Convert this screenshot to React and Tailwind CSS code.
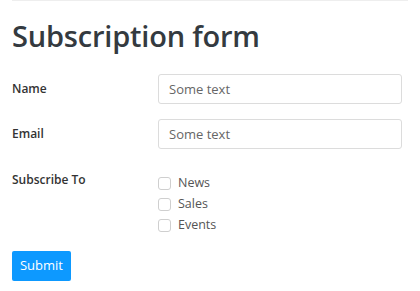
export default function App() {
  return (
    <div className="min-h-[291px] bg-white px-3 text-[#333]" style={{ fontFamily: '"Open Sans", "Noto Sans", sans-serif' }}>
      <div className="border-t border-[#eeeeee] pt-[15px]">
        <h1 className="text-[29px] font-semibold leading-[40px] text-[#343a40] tracking-[-0.2px]">Subscription form</h1>
        <form className="mt-[18px]" onSubmit={(e) => e.preventDefault()}>
          <div className="flex items-center">
            <label className="w-[146px] text-[12px] font-semibold">Name</label>
            <input
              type="text"
              placeholder="Some text"
              className="h-[30px] w-[244px] rounded-[3px] border border-[#dcdcdc] px-[10px] text-[13px] placeholder:text-[#666] outline-none"
            />
          </div>
          <div className="mt-[15px] flex items-center">
            <label className="w-[146px] text-[12px] font-semibold">Email</label>
            <input
              type="text"
              placeholder="Some text"
              className="h-[30px] w-[244px] rounded-[3px] border border-[#dcdcdc] px-[10px] text-[13px] placeholder:text-[#666] outline-none"
            />
          </div>
          <div className="mt-[22px] flex">
            <label className="w-[146px] text-[12px] font-semibold leading-[20px] -mt-[1px]">Subscribe To</label>
            <div className="flex flex-col gap-[3px] pt-[3px]">
              {['News', 'Sales', 'Events'].map((item) => (
                <label key={item} className="flex h-[18px] items-center gap-[7px] text-[12.5px] text-[#555]">
                  <span className="h-[13px] w-[13px] rounded-[3px] border border-[#cfcfcf] bg-white" />
                  {item}
                </label>
              ))}
            </div>
          </div>
          <button
            type="submit"
            className="mt-[17px] h-[30px] w-[59px] rounded-[2px] bg-[#0d99ff] text-[13px] text-white"
          >
            Submit
          </button>
        </form>
      </div>
    </div>
  );
}
